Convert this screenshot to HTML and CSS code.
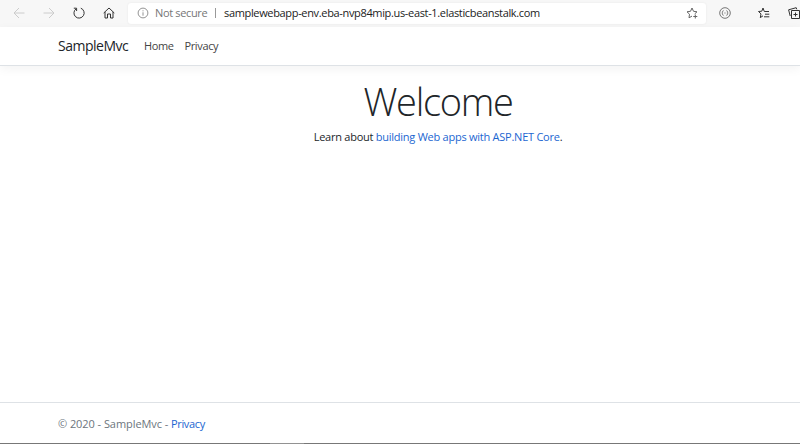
FILE: index.html
```html
<!DOCTYPE html>
<html lang="en">
<head>
<meta charset="utf-8">
<title>Home Page - SampleMvc</title>
<link rel="stylesheet" href="styles.css">
</head>
<body>
<div class="toolbar">
  <svg class="icon back faded" viewBox="0 0 12 12"><path d="M11.5 6H1M6 1L1 6l5 5"/></svg>
  <svg class="icon forward faded" viewBox="0 0 12 12"><path d="M.5 6H11M6 1l5 5-5 5"/></svg>
  <svg class="icon reload" viewBox="0 0 12 12"><path d="M7.8 1.2A5.1 5.1 0 1 1 3 1.9M.8 1.2h2.8V4"/></svg>
  <svg class="icon home" viewBox="0 0 12 12"><path d="M.7 6L6 1l5.3 5M2 5v6h2.5V7h3v4H10V5"/></svg>
  <div class="address">
    <svg class="info" viewBox="0 0 12 12"><circle cx="6" cy="6" r="4.9"/><path d="M6 5.3v3.4M6 3.3v1"/></svg>
    <span class="insecure">Not secure</span>
    <span class="separator"></span>
    <span class="url">samplewebapp-env.eba-nvp84mip.us-east-1.elasticbeanstalk.com</span>
    <svg class="favorite" viewBox="0 0 12 12"><path d="M8.7 6.9L11 4.8l-3.5-.5L6 1 4.5 4.3 1 4.8l2.5 2.4L3 10.8l3-1.7M9.3 7.5v4M7.3 9.5h4"/></svg>
  </div>
  <svg class="icon extension" viewBox="0 0 12 12"><circle cx="6" cy="6" r="5.3"/><path d="M4.5 3.6c-1.2 0-.7 1.8-1.5 2.4.8.6.3 2.4 1.5 2.4M7.5 3.6c1.2 0 .7 1.8 1.5 2.4-.8.6-.3 2.4-1.5 2.4M5 6h.6M6.5 6h.6"/></svg>
  <span class="divider"></span>
  <svg class="icon favorites" viewBox="0 0 12 12"><path d="M11 4.5H6.3L5 1 3.8 4.2l-3.3.3L3 6.9l-.7 3.7L5 8.8M7 7.2h4.3M6 9.8h5.3"/></svg>
  <svg class="icon collections" viewBox="0 0 12 12"><path d="M3.5 3.5h8v8h-8zM7.5 5.5v4M5.5 7.5h4M2.2 9L.6 2.8 8.2.7l.6 1.6"/></svg>
</div>
<header class="navbar">
  <a class="brand">SampleMvc</a>
  <a class="nav-home">Home</a>
  <a class="nav-privacy">Privacy</a>
</header>
<main>
  <h1>Welcome</h1>
  <p>Learn about <a>building Web apps with ASP.NET Core</a>.</p>
</main>
<footer><span>© 2020 - SampleMvc - <a>Privacy</a></span></footer>
<div class="window-edge"><span></span></div>
</body>
</html>
```
FILE: styles.css
```css
* { box-sizing: border-box; }
body {
  margin: 0;
  height: 444px;
  display: flex;
  flex-direction: column;
  overflow: hidden;
  background: #fff;
  color: #212529;
  font: 11px/18px "Open Sans", "Noto Sans", sans-serif;
  white-space: nowrap;
}
svg {
  display: block;
  flex: none;
  width: 12px;
  height: 12px;
  fill: none;
  stroke: #333;
  stroke-width: 1;
}
.toolbar {
  flex: none;
  height: 27px;
  display: flex;
  align-items: center;
  padding: 0 0 1px 13px;
  background: #f7f7f7;
}
.faded { stroke: #ccc; }
.forward { margin-left: 18px; }
.reload { margin-left: 18px; }
.home { margin-left: 18px; }
.address {
  flex: none;
  display: flex;
  align-items: center;
  width: 578px;
  height: 21px;
  margin-left: 13px;
  padding: 0 8px 0 9px;
  border-radius: 3px;
  background: #fff;
  box-shadow: 0 0 2px #e4e4e4;
}
.info { stroke: #777; stroke-width: .8; }
.insecure { width: 53px; margin-left: 6px; color: #767676; letter-spacing: -.35px; }
.separator { width: 1px; height: 10px; margin: 0 8px 0 7px; background: #999; }
.url { color: #222; letter-spacing: -.34px; }
.favorite { margin-left: auto; stroke: #666; }
.extension { margin-left: 13px; stroke: #555; stroke-width: .8; }
.divider { width: 1px; height: 11px; margin-left: 13px; background: #ddd; }
.favorites { margin-left: 14px; }
.collections { margin-left: 18px; }
.navbar {
  flex: none;
  display: flex;
  align-items: center;
  height: 39px;
  padding-left: 58px;
  border-bottom: 1px solid #dee2e6;
  box-shadow: 0 3px 10px rgba(0, 0, 0, .05);
}
.brand { width: 70px; font-size: 14px; letter-spacing: -.5px; }
.nav-home { width: 29px; margin-left: 16px; color: #444; letter-spacing: -.4px; }
.nav-privacy { margin-left: 11.5px; color: #444; letter-spacing: -.37px; }
main { flex: 1; padding: 13px 0 0 76px; text-align: center; }
h1 {
  margin: 0;
  font-size: 38px;
  line-height: 44px;
  font-weight: 300;
  letter-spacing: -1.3px;
}
p { margin: 5px 0 0; letter-spacing: -.25px; }
main a, footer a { color: #1b66d1; }
footer {
  flex: none;
  height: 41px;
  padding: 12px 0 0 58px;
  border-top: 1px solid #dee2e6;
  color: #6c757d;
  letter-spacing: -.06px;
}
footer a { letter-spacing: -.37px; }
.window-edge { flex: none; height: 1px; padding-left: 270px; background: #777; }
.window-edge span { display: block; width: 34px; height: 1px; background: #929292; }
```
